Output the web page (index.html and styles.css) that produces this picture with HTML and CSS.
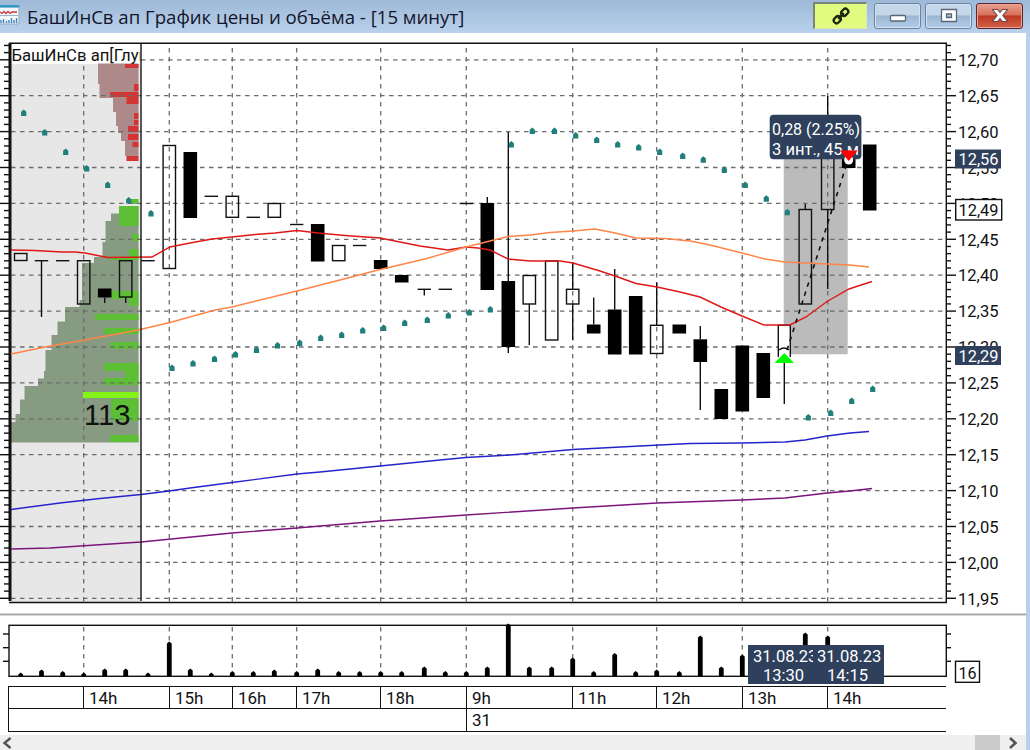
FILE: index.html
```html
<!DOCTYPE html>
<html lang="ru">
<head>
  <meta charset="UTF-8">
  <meta name="viewport" content="width=device-width, initial-scale=1.0">
  <title>БашИнСв ап График цены и объёма</title>
  <link rel="stylesheet" href="styles.css">
</head>
<body>
  <div class="window">
    <header class="titlebar">
      <svg class="app-icon" width="20" height="20" viewBox="0 0 20 20">
        <rect x="-2" y="0" width="21.5" height="19.5" fill="#f4f8fb"/>
        <rect x="-2" y="0" width="21.5" height="2.6" fill="#3398c4"/>
        <path d="M19 1V19H0" fill="none" stroke="#7f98ae"/>
        <path d="M0 7l2 1.5 2-2 2 2 2-2 2 2 2-1.5h5" fill="none" stroke="#c8393c" stroke-width="1.3"/>
        <path d="M0 10.5h18" stroke="#9fb6c8"/>
        <path d="M1 18v-3M3.5 18v-4M6.5 18v-2M9 18v-3M11.5 18v-5M14 18v-3M16.5 18v-5" stroke="#3b83c0" stroke-width="1.4"/>
      </svg>
      <h1 class="title">БашИнСв ап График цены и объёма - [15 минут]</h1>
      <div class="buttons">
        <button class="link-btn">
          <svg width="20" height="20" viewBox="0 0 20 20" fill="none" stroke="#1c260c" stroke-width="2.3">
            <g transform="rotate(-45 10 10)">
              <rect x="1" y="7.2" width="7.5" height="5.6" rx="2.6"/>
              <rect x="11.5" y="7.2" width="7.5" height="5.6" rx="2.6"/>
              <path d="M6 10h8"/>
            </g>
          </svg>
        </button>
        <button class="win-btn">
          <svg width="18" height="16" viewBox="0 0 18 16"><rect x="1.5" y="7.5" width="15" height="5.5" rx="1" fill="#fff" stroke="#5a6673" stroke-width="1.3"/></svg>
        </button>
        <button class="win-btn">
          <svg width="18" height="16" viewBox="0 0 18 16"><path d="M1.5 1.5h15v12h-15zM6.5 6v3.5h5v-3.5z" fill="#fff" fill-rule="evenodd" stroke="#5a6673" stroke-width="1.3"/></svg>
        </button>
        <button class="win-btn close">
          <svg width="18" height="16" viewBox="0 0 18 16"><path d="M1.500 1.500h5L9 4.500l2.500-3h5l-4.700 6 4.700 6h-5L9 10.500l-2.500 3h-5l4.700-6z" fill="#fff" stroke="#6b4a50" stroke-width="1.1"/></svg>
        </button>
      </div>
    </header>

    <main class="client">
      <svg id="price" class="price" width="1026" height="580" viewBox="0 33 1026 580">
        <clipPath id="profile-clip"><rect x="11" y="44" width="129" height="558"/></clipPath>
      </svg>
      <div class="splitter"></div>
      <svg id="volume" class="volume" width="1026" height="70" viewBox="0 616 1026 70"></svg>

      <div class="timeline">
        <div class="row hours">
          <span></span><span>14h</span><span>15h</span><span>16h</span><span>17h</span><span>18h</span><span>9h</span><span>11h</span><span>12h</span><span>13h</span><span>14h</span>
        </div>
        <div class="row days"><span></span><span>31</span></div>
      </div>

      <div class="date-tip from">31.08.23<br><span>13:30</span></div>
      <div class="date-tip to">31.08.23<br><span>14:15</span></div>
    </main>

    <div class="scrollbar">
      <svg width="14" height="14" viewBox="0 0 14 14"><path d="M10.5 2L4.5 7l6 5" fill="none" stroke="#555" stroke-width="2.4"/></svg>
      <div class="thumb"></div>
      <svg width="14" height="14" viewBox="0 0 14 14"><path d="M4 2l5.5 5L4 12" fill="none" stroke="#555" stroke-width="2.6"/></svg>
    </div>
  </div>

  <script>
    const NS = 'http://www.w3.org/2000/svg';
    const price = document.getElementById('price');
    const volume = document.getElementById('volume');

    const hours = [83.7, 169.3, 232.3, 296.7, 380.7, 466.3, 572.7, 656.7, 742.3, 827.7];

    // x, high, body top, body bottom, low, filled
    const candles = [
      [20.7, 253.5, 253.5, 260.5, 260.5, 0], [41.5, 260.7, 260.7, 260.7, 317, 0],
      [62.7, 260.7, 260.7, 260.7, 260.7, 0], [83.7, 260.7, 260.7, 304, 304, 0],
      [104.7, 288.5, 288.5, 297.5, 303, 1], [125.7, 260.7, 260.7, 297, 303, 0],
      [148, 260.7, 260.7, 260.7, 260.7, 0], [169.3, 145.5, 145.5, 268.5, 268.5, 0],
      [190.3, 152, 152, 218, 218, 1], [211.3, 196.3, 196.3, 196.3, 196.3, 0],
      [232.3, 196.3, 196.3, 217.3, 217.3, 0], [253.3, 217.3, 217.3, 217.3, 217.3, 0],
      [274.3, 203.5, 203.5, 217.3, 217.3, 0], [296.7, 224.5, 224.5, 224.5, 224.5, 0],
      [317.7, 224, 224, 261.5, 261.5, 1], [338.7, 245.5, 245.5, 260.7, 260.7, 0],
      [359.7, 245.5, 245.5, 245.5, 245.5, 0], [380.7, 260, 260, 269, 269, 1],
      [401.7, 275, 275, 282.5, 282.5, 1], [424.3, 289.3, 289.3, 289.3, 295.5, 0],
      [445.3, 289.3, 289.3, 289.3, 289.3, 0], [466.3, 203.5, 203.5, 203.5, 203.5, 0],
      [487.3, 197, 203, 290, 290, 1], [508.3, 132, 281, 347, 353, 1],
      [529.3, 275.5, 275.5, 304, 345, 0], [551.7, 261, 261, 340, 340, 0],
      [572.7, 262, 289.3, 304, 340, 0], [593.7, 297.5, 324.5, 333.5, 333.5, 1],
      [614.7, 269, 309.5, 354.5, 354.5, 1], [635.7, 296, 296, 354.5, 354.5, 1],
      [656.7, 282.5, 325.3, 353.5, 353.5, 0], [679.3, 324.5, 324.5, 333.5, 333.5, 1],
      [700.3, 326, 339.3, 362, 410, 1], [721.3, 389, 389, 419, 419, 1],
      [742.3, 345.5, 345.5, 411.5, 411.5, 1], [763.3, 353, 353, 398, 398, 1],
      [784.3, 325.3, 325.3, 357, 404, 2], [805.3, 204, 209.5, 304, 304, 0],
      [827.7, 96, 140, 209.5, 289, 0], [848.7, 156, 156, 168, 168, 1],
      [869.7, 144.5, 144.5, 210.5, 210.5, 1]
    ];

    const lines = [
      ['#e01818', '11,250 35,250.5 62,252 75,252 85,253 100,256 108,257.5 152,257 170,247 190,243 212,239 232,237 255,234.5 275,233 297,230.5 318,233 345,235.5 380,238 390,240 400,242 420,246 448,250 466,247 478,248 490,250 508,259 530,261 560,261 573,263 600,271 615,276 636,283.5 657,287 680,292 700,297 721,307 742,316 764,325 790,325 806,317 827,301.5 849,289 858,286 872,281.5'],
      ['#ff8448', '11,354 45,347 85,340 138,330 170,322.5 215,310 232,307 297,291 340,280 380,269.5 425,259 466,247 490,241 508,236.5 530,235 550,232.5 573,231 595,229 615,233 636,238 665,238.5 690,241 710,245 742,253 765,259 785,262 827,264 850,265 869,267'],
      ['#2424cc', '11,509.5 60,503 100,498.5 141,494.5 169,491 190,488 232,482.5 297,474 320,472 380,466 440,460 466,457.5 510,455 573,449.5 640,446 690,443.5 742,443 785,442 805,440 827,436 850,433 869,431.5'],
      ['#7a157a', '11,549 50,548 141,542 232,533 297,528 380,521 466,515 573,508 657,503 742,500 785,498 827,493 850,491 872,488.5']
    ];

    const dots = [
      [23.7, 113], [44.7, 132.5], [65.7, 152], [86.7, 168.5], [107.7, 185], [128.7, 200.5], [151, 213.5],
      [172, 368], [193, 363.5], [214.5, 359], [235.5, 354.5], [256.5, 350], [277.5, 345.5], [299.7, 343],
      [320.7, 338], [341.7, 335], [362.7, 330.5], [383.7, 328], [404.7, 323], [427.3, 320], [448.3, 315.5],
      [469.3, 312.5], [490.3, 309.5], [511.3, 144.5], [532.3, 131], [554.5, 131], [575.7, 135.5],
      [596.7, 140], [617.7, 144.5], [638.7, 147.5], [659.7, 152], [682.7, 156], [703.3, 159.7], [724.3, 170],
      [745.3, 185], [766.3, 198.7], [787.3, 212.3], [808.3, 417.5], [830.7, 413], [851.7, 401], [872.7, 389]
    ];

    // order book: top, bottom, left edge
    const askBars = [[64, 68, 125], [84, 91, 134], [92, 97, 110], [97, 104, 126.5], [113, 119, 134], [120, 125, 134],
      [126, 132, 128], [134, 140, 128], [142, 147, 132.5], [156, 161, 126.5]];
    const bidBars = [[199, 204, 131], [206, 226, 119], [234, 241, 132], [249, 257, 129], [257, 260, 110], [291, 299, 111],
      [299, 306, 129], [314, 320, 95], [328, 334, 104], [342, 349, 110], [363, 371, 104], [371, 378, 125],
      [378, 385, 104], [399, 421, 111], [435, 442, 110]];

    const volumes = [[20.7, 673], [41.5, 670], [62.7, 671.5], [83.7, 673], [104.7, 669], [125.7, 669], [148, 673],
      [169.3, 642], [190.3, 669], [211.3, 673], [232.3, 671.5], [253.3, 671.5], [274.3, 670], [296.7, 671.5],
      [317.7, 669], [338.7, 671.5], [359.7, 671.5], [380.7, 671.5], [401.7, 671.5], [424.3, 667],
      [445.3, 671.5], [466.3, 671.5], [487.3, 667], [508.3, 624], [529.3, 667], [551.7, 667], [572.7, 658],
      [593.7, 671.5], [614.7, 653.5], [635.7, 671.5], [656.7, 670], [679.3, 671.5], [700.3, 636],
      [721.3, 667], [742.3, 655], [763.3, 668], [784.3, 668], [805.3, 633], [827.7, 636]];

    function add(parent, tag, attrs, text) {
      const el = document.createElementNS(NS, tag);
      for (const k in attrs) el.setAttribute(k, attrs[k]);
      if (text) el.textContent = text;
      parent.appendChild(el);
      return el;
    }
    function rect(p, x, y, w, h, cls) {
      return add(p, 'rect', { x: x, y: y, width: w, height: h, class: cls });
    }
    function line(p, x1, y1, x2, y2, cls) {
      return add(p, 'line', { x1: x1, y1: y1, x2: x2, y2: y2, class: cls });
    }
    function label(p, x, y, w, text, cls) {
      return add(p, 'text', { x: x, y: y, textLength: w, lengthAdjust: 'spacingAndGlyphs', class: cls }, text);
    }

    // depth profile
    rect(price, 11, 64, 129, 538, 'depth-bg');
    add(price, 'path', { class: 'ask-area', d: 'M138.5 63.5H98V84H99.5V98H113V112H116V126H118V133H121V141H125V156H138.5Z' });
    add(price, 'path', { class: 'bid-area', d: 'M138.5 206H119V213.5H111V221H105.5V242H102.5V257H94V263H82V300H79.5V307H65V321.5H57.5V335H51.5V350H45.5V371H44V378.5H38V386H24.5V399.5H20V414H15.5V422H11V442.5H138.5Z' });
    askBars.forEach(b => rect(price, b[2], b[0], 138.5 - b[2], b[1] - b[0], 'ask'));
    bidBars.forEach(b => rect(price, b[2], b[0], 138.5 - b[2], b[1] - b[0], 'bid'));

    // measured range
    rect(price, 783.7, 140, 64, 214.3, 'range');

    // grid and scale
    for (let i = 0; i < 16; i++) line(price, i ? 11 : 141, 59.8 + i * 35.9, 946, 59.8 + i * 35.9, 'grid');
    hours.forEach(x => line(price, x, x < 141 ? 66 : 48, x, 602, 'grid'));
    rect(price, 83, 392, 55.5, 6, 'bid best');
    for (let i = -2; i <= 75; i++) {
      const y = 59.8 + i * 7.18;
      line(price, i % 5 ? 4 : 0, y, 9, y, 'axis');
      line(price, 946, y, i % 5 ? 951 : 956, y, 'axis');
    }
    for (let i = 0; i < 16; i++) {
      label(price, 958, 66 + i * 35.9, 40.5, (12.7 - i * 0.05).toFixed(2).replace('.', ','), 'num');
    }
    add(price, 'path', { d: 'M9 43.3H946.3V602.5H9', class: 'axis' });
    line(price, 10, 43, 10, 601, 'axis thick');

    candles.forEach(c => {
      const [x, hi, top, bottom, lo, fill] = c;
      if (hi < top) line(price, x, hi, x, top, 'wick');
      if (lo > bottom) line(price, x, bottom, x, lo, 'wick');
      if (top === bottom) line(price, x - 6.7, top, x + 6.7, top, 'wick');
      else if (fill === 1) rect(price, x - 6.8, top, 13.6, bottom - top, 'body');
      else if (fill === 2) add(price, 'path', { d: `M${x - 6} ${bottom}V${top}H${x + 6}V${bottom}`, class: 'entry' });
      else rect(price, x - 6.2, top, 12.4, bottom - top, 'hollow');
    });
    lines.forEach(l => add(price, 'polyline', { points: l[1], class: 'ma', stroke: l[0] }));
    dots.forEach(d => add(price, 'path', { class: 'sar', d: `M${d[0] - 2.6} ${d[1] - 1.2}l2.6 -2.2l2.6 2.2v4.2h-5.2z` }));

    line(price, 141, 43, 141, 601, 'axis');
    label(price, 11.5, 60.5, 137, 'БашИнСв ап[Глуц', 'num').setAttribute('clip-path', 'url(#profile-clip)');
    label(price, 84, 424.5, 46.5, '113', 'big');

    // measure tool
    line(price, 787, 350, 848, 160, 'ruler');
    rect(price, 769.7, 114.7, 91.7, 44.6, 'tip').setAttribute('rx', 4);
    label(price, 772, 135, 88, '0,28 (2.25%)', 'num light');
    label(price, 772, 155, 87, '3 инт., 45 м', 'num light');
    add(price, 'circle', { cx: 848.7, cy: 160, r: 4.5, fill: '#fff' });
    add(price, 'path', { d: 'M840 150.5H857.5L848.7 161Z', fill: '#f00' });
    add(price, 'path', { d: 'M779 350q5 -4 10 0', class: 'wick' });
    add(price, 'path', { d: 'M774.5 363L784.3 353L794 363Z', fill: '#0f0' });

    // price marks on the scale
    rect(price, 955, 149.5, 46, 19, 'tip');
    label(price, 958.5, 165, 40, '12,56', 'num light');
    rect(price, 955.7, 199.5, 46, 20.5, 'mark');
    label(price, 958.5, 216, 40, '12,49', 'num');
    rect(price, 955, 346, 46, 19, 'tip');
    label(price, 958.5, 361.5, 40, '12,29', 'num light');

    // volume pane
    hours.forEach(x => line(volume, x, 627, x, 676, 'grid'));
    rect(volume, 9, 625.3, 937.3, 51, 'hollow');
    [634, 647.7, 661.3].forEach(y => {
      line(volume, 3, y, 9, y, 'axis');
      line(volume, 946, y, 951, y, 'axis');
    });
    volumes.forEach(v => add(volume, 'path', { class: 'bar', d: `M${v[0] - 2.4} 676V${v[1] + 1.5}l2.4 -2l2.4 2V676Z` }));
    rect(volume, 955.5, 661.3, 24, 21, 'mark');
    label(volume, 958.5, 678.5, 18, '16', 'num');
  </script>
</body>
</html>
```
FILE: styles.css
```css
* {
  box-sizing: border-box;
  padding: 0;
  margin: 0;
}

body {
  font-family: Roboto, "Liberation Sans", sans-serif;
  overflow: hidden;
}

.window {
  width: 1030px;
  height: 750px;
  display: flex;
  flex-direction: column;
  background: #fff;
  border-right: 4px solid #b9d0ea;
}

/* Title bar */
.titlebar {
  height: 33px;
  display: flex;
  align-items: center;
  margin-right: -4px;
  padding-right: 7px;
  background: linear-gradient(#9db9d7, #b9d1ec);
}

.app-icon {
  margin-top: -3px;
}

.title {
  flex: 1;
  margin-left: 7px;
  font: 18.6px "Open Sans", "Noto Sans", sans-serif;
  color: #14142a;
  white-space: nowrap;
}

.buttons {
  display: flex;
  align-items: center;
  gap: 4px;
  padding-bottom: 2px;
}

.link-btn {
  width: 54px;
  height: 27px;
  margin-right: 3px;
  display: flex;
  align-items: center;
  justify-content: center;
  background: #e0fb80;
  border: 1px solid #d9ecb4;
  border-top: 2px solid #7b8577;
  border-left: 2px solid #7b8577;
}

.win-btn {
  width: 47px;
  height: 26px;
  display: flex;
  align-items: center;
  justify-content: center;
  background: linear-gradient(#c4d6e9 45%, #9bb6d2 50%, #b3cde8);
  border: 1px solid #6f849c;
  border-radius: 3px;
  box-shadow: inset 0 0 0 1px #d3e2f1;
}

.win-btn.close {
  background: linear-gradient(#e5a08f 0%, #d8705a 45%, #bd3820 50%, #d2614a);
  border-color: #5c2330;
  box-shadow: inset 0 0 0 1px #e9a595;
}

/* Chart panes */
.client {
  position: relative;
  height: 702px;
}

.price,
.volume {
  display: block;
}

.splitter {
  height: 3px;
  border-top: 1px solid #d0d0d0;
  border-bottom: 1px solid #d8d8d8;
  background: #a8a8a8;
}

svg text {
  font-family: Roboto, "Liberation Sans", sans-serif;
}

.num {
  font-size: 17px;
  fill: #111;
}

.light {
  fill: #fff;
}

.big {
  font-family: "Liberation Sans", sans-serif;
  font-size: 29px;
  fill: #111;
}

.grid {
  stroke: #6c6c6c;
  stroke-width: 1.3;
  stroke-dasharray: 4.5 4.5;
}

.axis,
.wick,
.hollow,
.entry {
  stroke: #111;
  stroke-width: 1.4;
  fill: none;
}

.entry {
  fill: #fff;
}

.thick {
  stroke-width: 3;
}

.depth-bg { fill: #e7e7e7; }
.ask-area { fill: #ad8989; }
.bid-area { fill: #879b82; }
.ask { fill: #d33535; }
.bid { fill: #5cbf36; }
.best { fill: #84f418; }
.range { fill: #bbb; }
.tip { fill: #2e405c; }
.sar { fill: #1f7f7a; }

.ma {
  fill: none;
  stroke-width: 1.4;
}

.ruler {
  stroke: #111;
  stroke-width: 1.6;
  stroke-dasharray: 4.5 5;
}

.mark {
  fill: #fff;
  stroke: #111;
  stroke-width: 1.4;
}

/* Time scale */
.timeline {
  width: 938px;
  height: 46px;
  margin-left: 8px;
  border: solid #111;
  border-width: 1px 0 1px 1px;
  font-size: 17px;
  color: #111;
}

.row {
  display: grid;
  height: 22px;
  line-height: 22px;
}

.hours {
  grid-template-columns: 74px 86px 63px 64px 84px 86px 106px 84px 86px 85px 1fr;
  border-bottom: 1px solid #111;
}

.days {
  grid-template-columns: 457px 1fr;
}

.row span + span {
  padding-left: 5px;
  border-left: 1px solid #111;
}

.date-tip {
  position: absolute;
  top: 612px;
  height: 39px;
  padding-top: 2px;
  overflow: hidden;
  background: #2e405c;
  color: #fff;
  font-size: 16.5px;
  line-height: 19px;
  white-space: nowrap;
}

.from {
  left: 748px;
  width: 65px;
  padding-left: 5px;
}

.to {
  left: 813px;
  width: 71px;
  padding-left: 4px;
}

.date-tip span {
  margin-left: 10px;
}

.scrollbar {
  height: 15px;
  display: flex;
  align-items: center;
  justify-content: space-between;
  padding: 0 6px 0 0;
  background: #efefef;
}

.thumb {
  width: 25px;
  height: 15px;
  margin-left: auto;
  margin-right: 6px;
  background: #cbcbcb;
}
```
